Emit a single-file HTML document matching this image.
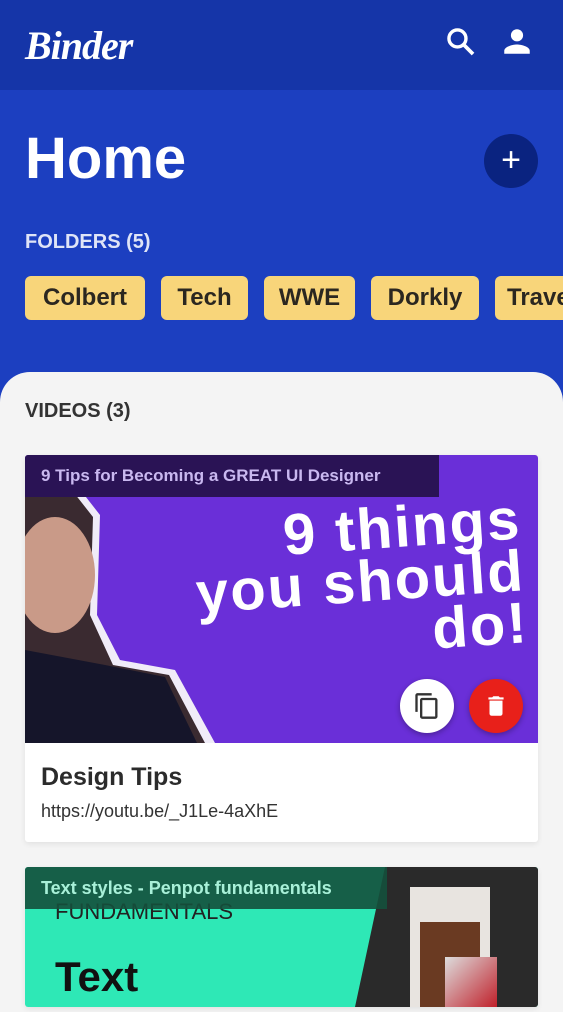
<!DOCTYPE html>
<html><head><meta charset="utf-8"><style>
*{margin:0;padding:0;box-sizing:border-box}
body{width:563px;height:1000px;overflow:hidden;background:#1c3fc0;font-family:"Liberation Sans",sans-serif;position:relative}
.hdr{position:absolute;left:0;top:0;width:563px;height:90px;background:#1535a8}
.logo{position:absolute;left:25px;top:22px;color:#fff;font:italic bold 40px "Liberation Serif",serif;letter-spacing:-1px}
.home{position:absolute;left:25px;top:125px;color:#fff;font-weight:bold;font-size:58px;letter-spacing:0px}
.plus{position:absolute;left:484px;top:134px;width:54px;height:54px;border-radius:50%;background:#0a2380;color:#fff;font-size:34px;text-align:center;line-height:52px}
.fl{position:absolute;left:25px;top:231px;color:#dfe4f7;font-weight:bold;font-size:20px}
.chip{position:absolute;top:276px;height:44px;background:#f8d57a;border-radius:6px;color:#2b2720;font-weight:bold;font-size:24px;line-height:44px;text-align:center}
.sheet{position:absolute;left:0;top:372px;width:563px;height:640px;background:#f4f4f4;border-radius:30px 30px 0 0}
.vid{position:absolute;left:25px;top:400px;color:#333;font-weight:bold;font-size:20px}
.card{position:absolute;left:25px;width:513px;background:#fff;border-radius:3px;overflow:hidden;box-shadow:0 2px 6px rgba(0,0,0,.08)}
.cap{position:absolute;left:0;top:0;height:42px;line-height:42px;padding-left:16px;font-weight:bold;font-size:18px}
</style></head><body>
<div class="hdr">
<div class="logo">Binder</div>
<svg style="position:absolute;left:444px;top:25px" width="34" height="34" viewBox="0 0 24 24"><circle cx="9.5" cy="9.5" r="6" fill="none" stroke="#fff" stroke-width="2.4"/><path d="M14 14l6.5 6.5" stroke="#fff" stroke-width="2.6"/></svg>
<svg style="position:absolute;left:500px;top:24px" width="34" height="34" viewBox="0 0 24 24"><circle cx="12" cy="8" r="4.3" fill="#fff"/><path d="M3 21v-2c0-3 6-4.5 9-4.5s9 1.5 9 4.5v2z" fill="#fff"/></svg>
</div>
<div class="home">Home</div>
<div class="plus">+</div>
<div class="fl">FOLDERS (5)</div>
<div class="chip" style="left:25px;width:120px">Colbert</div>
<div class="chip" style="left:161px;width:87px">Tech</div>
<div class="chip" style="left:264px;width:91px">WWE</div>
<div class="chip" style="left:371px;width:108px">Dorkly</div>
<div class="chip" style="left:495px;width:90px;text-align:left;padding-left:12px">Travel</div>
<div class="sheet"></div>
<div class="vid">VIDEOS (3)</div>
<div class="card" style="top:455px;height:387px">
 <div style="position:absolute;left:0;top:0;width:513px;height:288px;background:#6a2fd8;overflow:hidden">
  <svg width="513" height="288" style="position:absolute;left:0;top:0"><path d="M0 30 L50 28 L75 60 L72 160 L95 205 L150 215 L190 288 L0 288Z" fill="#f0ecf8"/><path d="M0 36 L46 34 L68 62 L65 160 L88 210 L144 220 L180 288 L0 288Z" fill="#3a2a30"/><ellipse cx="30" cy="120" rx="40" ry="58" fill="#c99a88"/><path d="M0 195 L80 210 L140 222 L172 288 L0 288Z" fill="#15152a"/></svg>
  <div style="position:absolute;left:160px;top:50px;width:340px;text-align:right;color:#fff;font-weight:bold;font-size:58px;line-height:52px;letter-spacing:2px;transform:rotate(-4deg)">9 things<br>you should<br>do!</div>
  <div class="cap" style="width:414px;background:#2a1355;color:#c9b8f0;font-size:17px">9 Tips for Becoming a GREAT UI Designer</div>
  <div style="position:absolute;left:375px;top:224px;width:54px;height:54px;border-radius:50%;background:#fff;box-shadow:0 2px 6px rgba(0,0,0,.3)"><svg style="margin:13px" width="28" height="28" viewBox="0 0 24 24"><path d="M16 1H4c-1.1 0-2 .9-2 2v14h2V3h12V1zm3 4H8c-1.1 0-2 .9-2 2v14c0 1.1.9 2 2 2h11c1.1 0 2-.9 2-2V7c0-1.1-.9-2-2-2zm0 16H8V7h11v14z" fill="#333"/></svg></div>
  <div style="position:absolute;left:444px;top:224px;width:54px;height:54px;border-radius:50%;background:#e8201a;box-shadow:0 2px 6px rgba(0,0,0,.3)"><svg style="margin:14px" width="26" height="26" viewBox="0 0 24 24"><path d="M6 19c0 1.1.9 2 2 2h8c1.1 0 2-.9 2-2V7H6v12zM19 4h-3.5l-1-1h-5l-1 1H5v2h14V4z" fill="#fff"/></svg></div>
 </div>
 <div style="position:absolute;left:16px;top:308px;color:#2b2b2b;font-weight:bold;font-size:25px">Design Tips</div>
 <div style="position:absolute;left:16px;top:346px;color:#333;font-size:18px">https://youtu.be/_J1Le-4aXhE</div>
</div>
<div class="card" style="top:867px;height:140px">
 <div style="position:absolute;left:0;top:0;width:513px;height:140px;background:#2ee8b6"></div>
 <div style="position:absolute;left:330px;top:0;width:183px;height:140px;background:#2a2a2a;clip-path:polygon(30px 0,183px 0,183px 140px,0 140px)"></div>
 <div style="position:absolute;left:385px;top:20px;width:80px;height:120px;background:#e8e4e0"></div>
 <div style="position:absolute;left:395px;top:55px;width:60px;height:85px;background:#6a3a22"></div>
 <div style="position:absolute;left:420px;top:90px;width:52px;height:50px;background:linear-gradient(135deg,#ddd,#c0202a)"></div>
 <div style="position:absolute;left:30px;top:32px;color:#222;font-size:22px">FUNDAMENTALS</div>
 <div style="position:absolute;left:30px;top:86px;color:#111;font-weight:bold;font-size:42px">Text</div>
 <div class="cap" style="width:362px;background:rgba(20,80,60,.9);color:#a8f0d8;font-size:18px">Text styles - Penpot fundamentals</div>
</div>
</body></html>
